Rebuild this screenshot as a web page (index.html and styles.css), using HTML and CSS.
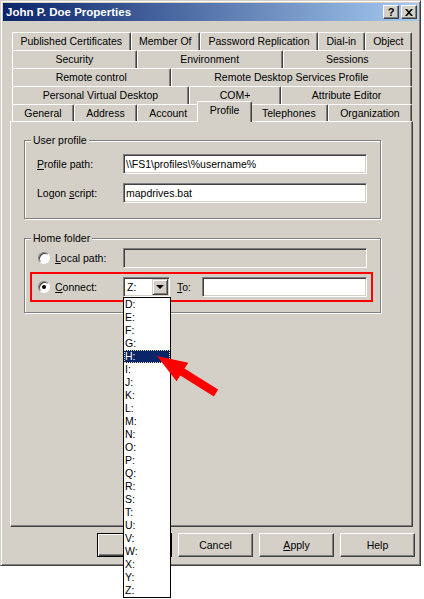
FILE: index.html
```html
<!DOCTYPE html>
<html>
<head>
<meta charset="utf-8">
<link rel="stylesheet" href="styles.css">
</head>
<body>
<div class="page">
<div class="window">
  <div class="titlebar">
    <span class="title">John P. Doe Properties</span>
    <div class="caption-buttons">
      <span class="cap-btn">?</span>
      <span class="cap-btn"><svg width="8" height="7" viewBox="0 0 8 7"><path d="M0 0h2l2 2.2 2-2.2h2l-3 3.5 3 3.5h-2l-2-2.2-2 2.2h-2l3-3.5z" fill="#000"/></svg></span>
    </div>
  </div>

  <div class="tabs">
    <div class="tab-row">
      <div class="tab">Published Certificates</div>
      <div class="tab">Member Of</div>
      <div class="tab">Password Replication</div>
      <div class="tab">Dial-in</div>
      <div class="tab">Object</div>
    </div>
    <div class="tab-row">
      <div class="tab">Security</div>
      <div class="tab">Environment</div>
      <div class="tab">Sessions</div>
    </div>
    <div class="tab-row">
      <div class="tab">Remote control</div>
      <div class="tab">Remote Desktop Services Profile</div>
    </div>
    <div class="tab-row">
      <div class="tab">Personal Virtual Desktop</div>
      <div class="tab">COM+</div>
      <div class="tab">Attribute Editor</div>
    </div>
    <div class="tab-row front">
      <div class="tab">General</div>
      <div class="tab">Address</div>
      <div class="tab">Account</div>
      <div class="tab selected">Profile</div>
      <div class="tab">Telephones</div>
      <div class="tab">Organization</div>
    </div>
  </div>

  <div class="panel">
    <fieldset class="group user-profile">
      <legend>User profile</legend>
      <div class="field-row">
        <span class="label"><u>P</u>rofile path:</span>
        <div class="textbox">\\FS1\profiles\%username%</div>
      </div>
      <div class="field-row">
        <span class="label">Logon <u>s</u>cript:</span>
        <div class="textbox">mapdrives.bat</div>
      </div>
    </fieldset>

    <fieldset class="group home">
      <legend>Home folder</legend>
      <div class="option-row local">
        <span class="radio"></span>
        <span class="opt-label"><u>L</u>ocal path:</span>
        <div class="textbox disabled"></div>
      </div>
      <div class="option-row connect">
        <span class="radio checked"></span>
        <span class="opt-label"><u>C</u>onnect:</span>
        <div class="combo">
          <span class="combo-text">Z:</span>
          <span class="combo-btn"><span class="tri"></span></span>
        </div>
        <span class="to-label"><u>T</u>o:</span>
        <div class="textbox short"></div>
      </div>
    </fieldset>
  </div>

  <div class="buttons">
    <div class="btn default">OK</div>
    <div class="btn">Cancel</div>
    <div class="btn"><u>A</u>pply</div>
    <div class="btn">Help</div>
  </div>

  <ul class="dropdown">
    <li>D:</li><li>E:</li><li>F:</li><li>G:</li><li class="sel">H:</li><li>I:</li><li>J:</li><li>K:</li><li>L:</li><li>M:</li><li>N:</li><li>O:</li><li>P:</li><li>Q:</li><li>R:</li><li>S:</li><li>T:</li><li>U:</li><li>V:</li><li>W:</li><li>X:</li><li>Y:</li><li>Z:</li>
  </ul>

  <svg class="arrow" width="75" height="52" viewBox="150 350 75 52">
    <polygon points="157,356 188.3,362.7 184.5,368.6 218.1,389.6 213.9,396.4 180.3,375.4 176.5,381.3" fill="#ff0000"/>
  </svg>
</div>
</div>
</body>
</html>
```

FILE: styles.css
```css
html, body {
  margin: 0;
  padding: 0;
  background: #fff;
}

body {
  font-family: "Liberation Sans", Arial, sans-serif;
  font-size: 10.5px;
  color: #000;
}

.page {
  height: 599px;
}

.window {
  position: relative;
  width: 421px;
  height: 566px;
  box-sizing: border-box;
  background: #d4d0c8;
  border: 1px solid;
  border-color: #d4d0c8 #404040 #404040 #d4d0c8;
  box-shadow: inset 1px 1px #fff, inset -1px -1px #808080;
  padding: 2px;
}

.titlebar {
  height: 18px;
  display: flex;
  align-items: center;
  background: linear-gradient(to right, #0a246a, #a6caf0);
  padding: 0 1px 0 3px;
}

.title {
  flex: 1;
  color: #fff;
  font-weight: bold;
  font-size: 11.5px;
  white-space: nowrap;
}

.caption-buttons {
  display: flex;
  gap: 2px;
}

.cap-btn {
  width: 16px;
  height: 14px;
  box-sizing: border-box;
  background: #d4d0c8;
  border: 1px solid;
  border-color: #fff #404040 #404040 #fff;
  box-shadow: inset -1px -1px #808080;
  display: flex;
  align-items: center;
  justify-content: center;
  font-weight: bold;
  font-size: 11px;
  line-height: 12px;
}

/* Tabs */
.tabs {
  margin: 11px 0 0 9px;
  width: 400px;
}

.tab-row {
  display: flex;
  height: 18px;
}

.tab-row.front {
  height: 17px;
  position: relative;
  z-index: 1;
}

.tab {
  flex: 1 1 auto;
  box-sizing: border-box;
  border: 1px solid;
  border-bottom: none;
  border-color: #fff #404040 #fff #fff;
  box-shadow: inset -1px 0 #808080;
  border-radius: 2px 2px 0 0;
  text-align: center;
  line-height: 17px;
  white-space: nowrap;
  padding: 0 1px;
  background: #d4d0c8;
}

.tab.selected {
  position: relative;
  z-index: 2;
  margin: -3px -2px -1px;
  height: 21px;
  line-height: 17px;
}

/* Panel */
.panel {
  margin-left: 7px;
  width: 403px;
  height: 406px;
  box-sizing: border-box;
  border: 1px solid;
  border-color: #fff #404040 #404040 #fff;
  box-shadow: inset -1px -1px #808080;
  padding: 12px 0 0 13px;
}

.group {
  margin: 0;
  width: 357px;
  min-width: 0;
  box-sizing: border-box;
  border: 1px solid #808080;
  box-shadow: inset 1px 1px #fff, 1px 1px #fff;
}

.group legend {
  padding: 0 2px;
  margin-left: 1px;
  line-height: 13px;
  background: #d4d0c8;
}

.user-profile {
  padding: 7px 6px 15px 5px;
}

.field-row {
  display: flex;
  align-items: center;
  height: 20px;
  padding-left: 7px;
}

.field-row + .field-row {
  margin-top: 9px;
}

.label {
  width: 86px;
  white-space: nowrap;
}

.textbox {
  width: 244px;
  height: 20px;
  box-sizing: border-box;
  background: #fff;
  border: 1px solid;
  border-color: #808080 #fff #fff #808080;
  box-shadow: inset 1px 1px #404040, inset -1px -1px #d4d0c8;
  padding: 0 2px;
  line-height: 18px;
  white-space: nowrap;
  overflow: hidden;
}

.textbox.disabled {
  background: #d4d0c8;
}

.textbox.short {
  width: 165px;
}

.home {
  margin-top: 13px;
  padding: 3px 7px 10px 5px;
}

.option-row {
  display: flex;
  align-items: center;
}

.option-row.local {
  height: 20px;
  padding-left: 8px;
  margin-bottom: 4px;
}

.option-row.connect {
  height: 30px;
  box-sizing: border-box;
  border: 2px solid #ff0000;
  padding: 3px 4px 3px 6px;
}

.radio {
  position: relative;
  width: 12px;
  height: 12px;
  box-sizing: border-box;
  border-radius: 50%;
  background: #fff;
  border: 1px solid;
  border-color: #808080 #fff #fff #808080;
  box-shadow: inset 1px 1px #404040;
  flex: none;
}

.radio.checked::after {
  content: "";
  position: absolute;
  left: 3px;
  top: 3px;
  width: 4px;
  height: 4px;
  border-radius: 50%;
  background: #000;
}

.opt-label {
  margin-left: 5px;
  width: 68px;
  white-space: nowrap;
}

.combo {
  width: 47px;
  height: 20px;
  box-sizing: border-box;
  background: #fff;
  border: 1px solid;
  border-color: #808080 #fff #fff #808080;
  box-shadow: inset 1px 1px #404040, inset -1px -1px #d4d0c8;
  padding: 1px;
  display: flex;
  align-items: center;
}

.combo-text {
  flex: 1;
  padding-left: 2px;
  line-height: 16px;
}

.combo-btn {
  width: 16px;
  height: 16px;
  box-sizing: border-box;
  background: #d4d0c8;
  border: 1px solid;
  border-color: #d4d0c8 #404040 #404040 #d4d0c8;
  box-shadow: inset 1px 1px #fff, inset -1px -1px #808080;
  display: flex;
  align-items: center;
  justify-content: center;
}

.tri {
  width: 0;
  height: 0;
  border-left: 4px solid transparent;
  border-right: 4px solid transparent;
  border-top: 4px solid #000;
}

.to-label {
  margin-left: 7px;
  width: 25px;
}

/* Buttons */
.buttons {
  display: flex;
  justify-content: flex-end;
  gap: 6px;
  margin-top: 6px;
  padding-right: 3px;
}

.btn {
  width: 75px;
  height: 24px;
  box-sizing: border-box;
  border: 1px solid;
  border-color: #fff #404040 #404040 #fff;
  box-shadow: inset -1px -1px #808080;
  text-align: center;
  line-height: 22px;
}

.btn.default {
  border-color: #000;
  box-shadow: inset 1px 1px #fff, inset -1px -1px #404040, inset -2px -2px #808080;
}

/* Drop-down list overlay */
.dropdown {
  position: absolute;
  left: 122px;
  top: 296px;
  width: 48px;
  box-sizing: border-box;
  margin: 0;
  padding: 0;
  list-style: none;
  background: #fff;
  border: 1px solid #000;
  z-index: 5;
}

.dropdown li {
  height: 13px;
  line-height: 13px;
  padding-left: 1px;
}

.dropdown li.sel {
  background: #0a246a;
  color: #fff;
  outline: 1px dotted #e8e4b0;
  outline-offset: -1px;
}

.arrow {
  position: absolute;
  left: 149px;
  top: 349px;
  z-index: 6;
}
```
